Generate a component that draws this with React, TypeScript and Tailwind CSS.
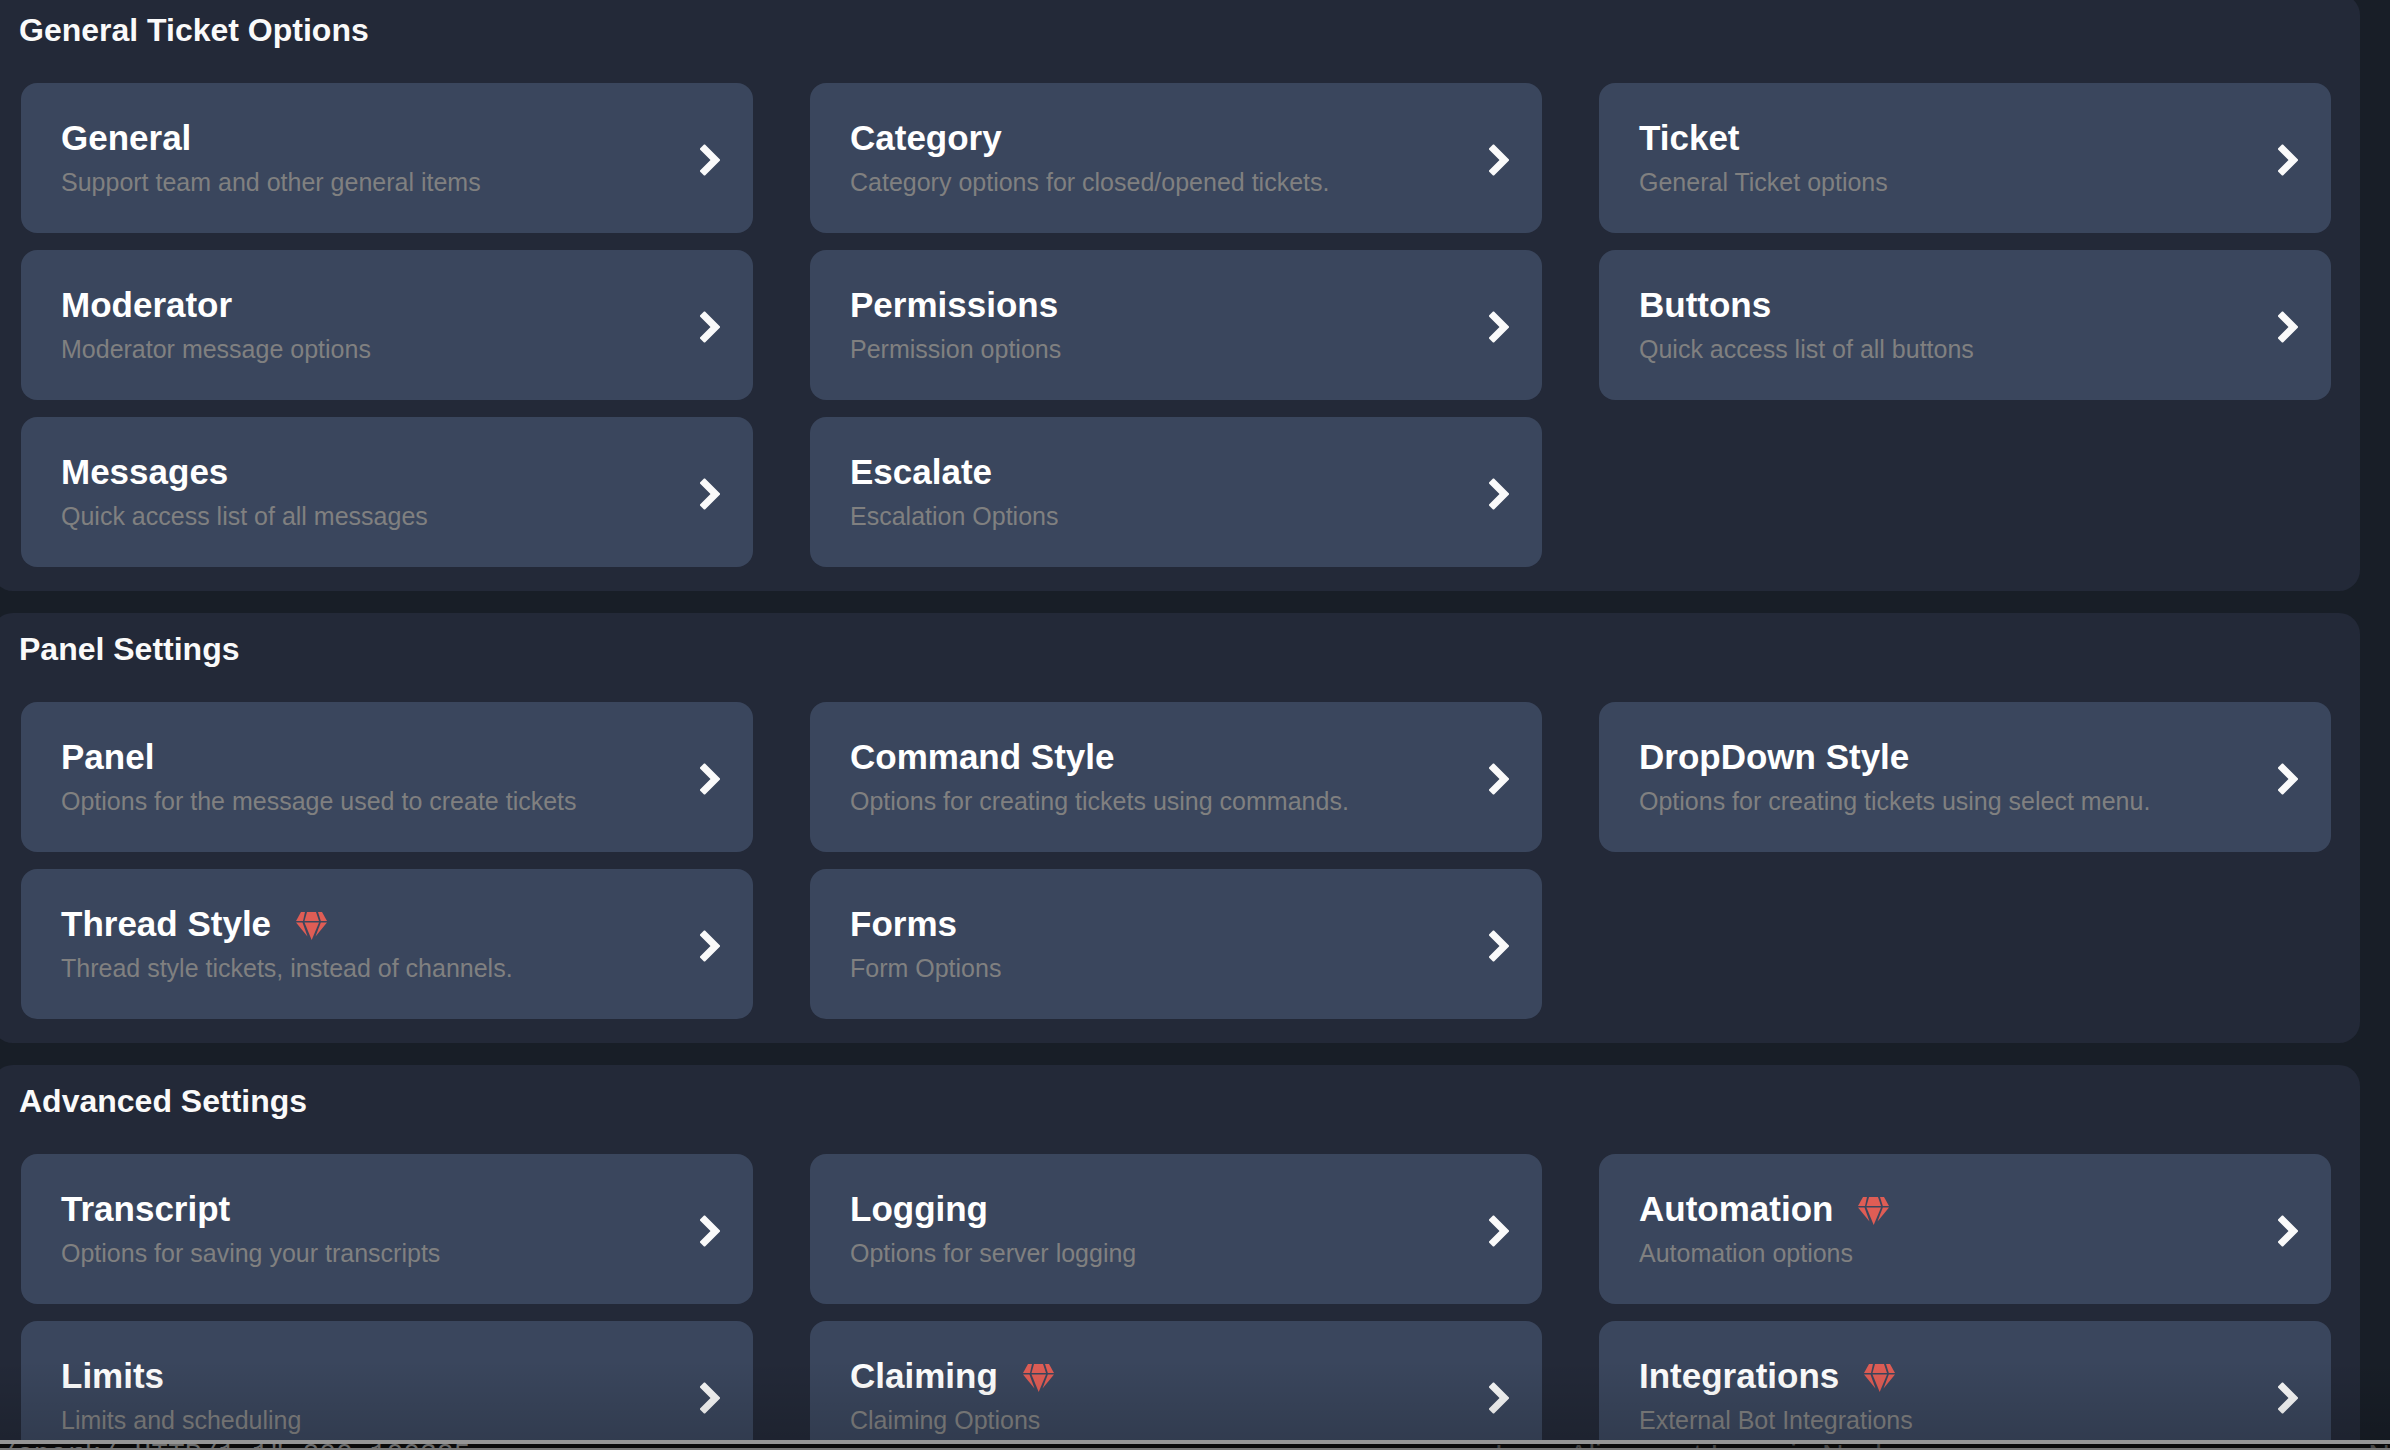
import React from 'react';

interface Option {
  title: string;
  description: string;
  premium?: boolean;
}

interface Section {
  title: string;
  options: Option[];
}

const sections: Section[] = [
  {
    title: 'General Ticket Options',
    options: [
      { title: 'General', description: 'Support team and other general items' },
      { title: 'Category', description: 'Category options for closed/opened tickets.' },
      { title: 'Ticket', description: 'General Ticket options' },
      { title: 'Moderator', description: 'Moderator message options' },
      { title: 'Permissions', description: 'Permission options' },
      { title: 'Buttons', description: 'Quick access list of all buttons' },
      { title: 'Messages', description: 'Quick access list of all messages' },
      { title: 'Escalate', description: 'Escalation Options' },
    ],
  },
  {
    title: 'Panel Settings',
    options: [
      { title: 'Panel', description: 'Options for the message used to create tickets' },
      { title: 'Command Style', description: 'Options for creating tickets using commands.' },
      { title: 'DropDown Style', description: 'Options for creating tickets using select menu.' },
      { title: 'Thread Style', description: 'Thread style tickets, instead of channels.', premium: true },
      { title: 'Forms', description: 'Form Options' },
    ],
  },
  {
    title: 'Advanced Settings',
    options: [
      { title: 'Transcript', description: 'Options for saving your transcripts' },
      { title: 'Logging', description: 'Options for server logging' },
      { title: 'Automation', description: 'Automation options', premium: true },
      { title: 'Limits', description: 'Limits and scheduling' },
      { title: 'Claiming', description: 'Claiming Options', premium: true },
      { title: 'Integrations', description: 'External Bot Integrations', premium: true },
    ],
  },
];

const GemIcon = () => (
  <svg viewBox="0 0 31 28" className="mt-1 h-7 w-[31px] fill-[#df5d55]" role="img" aria-label="Premium">
    <path d="M5 0H9L7 9H0Z" />
    <path d="M11 0H20L23 9H8.5Z" />
    <path d="M22 0H26L31 9H24.8Z" />
    <path d="M0 10.5H6.5L11.5 24.5Z" />
    <path d="M8.5 10.5H23L15.7 28Z" />
    <path d="M24.8 10.5H31L19.5 24.5Z" />
  </svg>
);

const ChevronIcon = () => (
  <svg viewBox="0 0 20 32" className="mt-1 h-8 w-5 shrink-0 fill-[#fafafa]" aria-hidden="true">
    <path d="M4 0.5H5L20 15.5V16.5L5 31.5H4L0 27.5V26.5L10.5 16L0 5.5V4.5Z" />
  </svg>
);

const OptionCard = ({ title, description, premium }: Option) => (
  <button
    type="button"
    className="flex h-[150px] min-w-0 cursor-pointer items-center justify-between rounded-2xl bg-[#3a465d] pr-[33px] pl-10 text-left"
  >
    <span className="flex min-w-0 flex-col gap-1 pt-1">
      <span className="flex items-center gap-[25px] text-[35px] leading-10 font-bold text-white">
        {title}
        {premium && <GemIcon />}
      </span>
      <span className="truncate text-[25px] leading-10 text-[#808080]">{description}</span>
    </span>
    <ChevronIcon />
  </button>
);

const SettingsSection = ({ title, options }: Section) => (
  <section className="rounded-[21px] bg-[#232938] px-[29px] pt-4 pb-6">
    <h2 className="mb-[33px] -ml-0.5 text-[32px] leading-10 font-bold text-[#fafafa]">{title}</h2>
    <div className="grid grid-cols-3 gap-x-[57px] gap-y-[17px]">
      {options.map((option) => (
        <OptionCard key={option.title} {...option} />
      ))}
    </div>
  </section>
);

// Edge of the windows lying below, with the shadow they cast on the page
const WindowEdge = () => (
  <div className="pointer-events-none absolute inset-x-0 bottom-0">
    <div className="h-20 bg-linear-to-b from-transparent to-black/15" />
    <div className="h-1 bg-[#959595]" />
    <div className="flex h-1 overflow-hidden bg-[#0a0a0a] leading-[22px] whitespace-pre">
      <span className="font-['Liberation_Mono',monospace] text-[28px] text-[#6b6b6b]">
        {'/spark/ HTTP/1.1" 200 100325'}
      </span>
      <span className="ml-auto flex w-[895px] justify-between text-[30px] text-[#444444]">
        <span>Logo Alignment Issue in Navbar</span>
        <span>N</span>
      </span>
    </div>
    <div className="h-0.5 bg-[#777777]" />
  </div>
);

export default function App() {
  return (
    <div className="relative h-screen overflow-hidden bg-[#181e27] font-['Liberation_Sans',Arial,sans-serif]">
      <main className="-mt-1.5 mr-[30px] -ml-2 flex flex-col gap-[22px]">
        {sections.map((section) => (
          <SettingsSection key={section.title} {...section} />
        ))}
      </main>
      <WindowEdge />
    </div>
  );
}
